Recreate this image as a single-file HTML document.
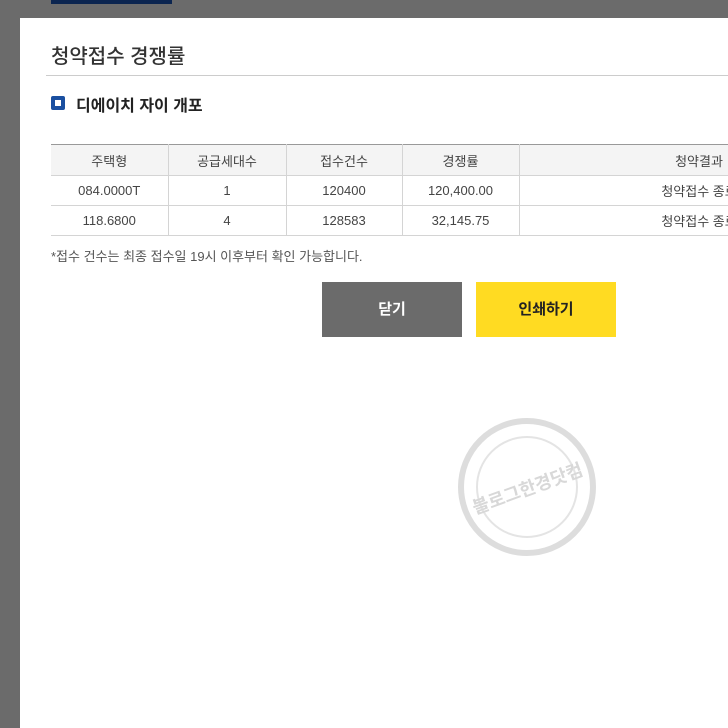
<!DOCTYPE html>
<html><head><meta charset="utf-8"><style>
body{margin:0;width:728px;height:728px;background:#6b6b6b;position:relative;overflow:hidden;font-family:"Liberation Sans","Noto Sans CJK KR",sans-serif;}
.bar{position:absolute;left:51px;top:0;width:121px;height:4px;background:#0b2550;}
.panel{position:absolute;left:20px;top:18px;width:708px;height:710px;background:#fff;}
.t{position:absolute;left:51px;top:40px;font-size:20px;color:#333;font-weight:500;}
.hl{position:absolute;left:46px;top:75px;width:682px;height:1px;background:#ccc;}
.ic{position:absolute;left:51px;top:96px;width:14px;height:14px;background:#1a4fa0;border-radius:2px;}
.ic:after{content:"";position:absolute;left:4px;top:4px;width:6px;height:6px;background:#fff;}
.st{position:absolute;left:76px;top:92px;font-size:16px;font-weight:bold;color:#222;}
table{position:absolute;left:51px;top:144px;border-collapse:collapse;font-size:13px;color:#444;table-layout:fixed;width:828px;}
td,th{border:1px solid #d4d4d4;text-align:center;height:29px;padding:0;font-weight:normal;}
tr:first-child th{border-top:1px solid #999;background:#f4f4f4;height:30px;}
td:first-child,th:first-child{border-left:none;}
.n{position:absolute;left:51px;top:246px;font-size:13px;color:#555;}
.b{position:absolute;top:282px;width:140px;height:55px;line-height:55px;text-align:center;font-size:15px;font-weight:bold;}
</style></head><body>
<div class="bar"></div>
<div class="panel"></div>
<div class="t">청약접수 경쟁률</div>
<div class="hl"></div>
<div class="ic"></div>
<div class="st">디에이치 자이 개포</div>
<table>
<colgroup><col style="width:117px"><col style="width:118px"><col style="width:116px"><col style="width:117px"><col style="width:360px"></colgroup>
<tr><th>주택형</th><th>공급세대수</th><th>접수건수</th><th>경쟁률</th><th>청약결과</th></tr>
<tr><td>084.0000T</td><td>1</td><td>120400</td><td>120,400.00</td><td>청약접수 종료</td></tr>
<tr><td>118.6800</td><td>4</td><td>128583</td><td>32,145.75</td><td>청약접수 종료</td></tr>
</table>
<div class="n">*접수 건수는 최종 접수일 19시 이후부터 확인 가능합니다.</div>
<div class="b" style="left:322px;background:#6b6b6b;color:#fff;">닫기</div>
<div class="b" style="left:476px;background:#ffdb22;color:#222;">인쇄하기</div>
<svg style="position:absolute;left:455px;top:415px" width="145" height="145"><circle cx="72" cy="72" r="66" fill="none" stroke="#ddd" stroke-width="6"/><circle cx="72" cy="72" r="50" fill="none" stroke="#e4e4e4" stroke-width="2"/><text x="72" y="80" text-anchor="middle" font-size="18" fill="#d8d8d8" font-weight="bold" transform="rotate(-20 72 72)" font-family="Noto Sans CJK KR">블로그한경닷컴</text></svg>
</body></html>
